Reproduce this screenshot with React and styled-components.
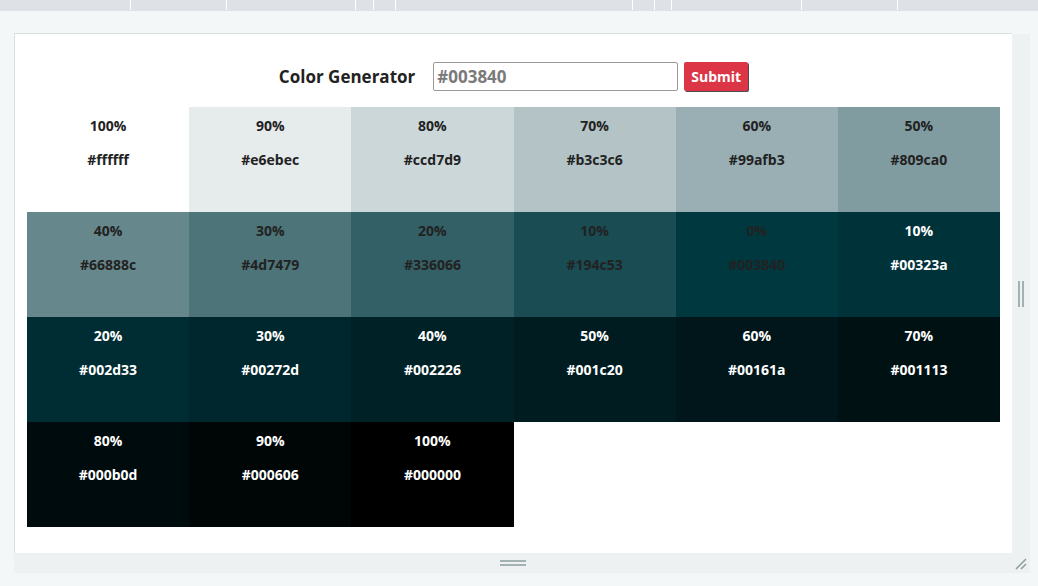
import styled, { createGlobalStyle } from "styled-components"

const GlobalStyle = createGlobalStyle`
  body {
    margin: 0;
    background: #f4f7f7;
    font-family: "Open Sans", "Noto Sans", sans-serif;
  }
`

const TopBar = styled.div`
  height: 11px;
  background: #dee1e6;
  display: flex;
`

const Tab = styled.div`
  width: ${props => props.$w}px;
  height: 10px;
  border-right: 1px solid #ffffff;
  flex-shrink: 0;
`

const Stage = styled.div`
  padding: 22px 0 0 14px;
`

const Frame = styled.div`
  display: grid;
  grid-template-columns: 998px 18px;
  grid-template-rows: 520px 20px;
`

const Card = styled.div`
  box-sizing: border-box;
  background: #ffffff;
  border-top: 1px solid #dcdfdf;
  border-left: 1px solid #dcdfdf;
  padding: 28px 12px 26px 12px;
`

const SideGrip = styled.div`
  margin-top: 1px;
  background: #eef1f2;
  display: flex;
  align-items: center;
  justify-content: center;
  gap: 2px;

  span {
    width: 2px;
    height: 26px;
    background: #a3b1b2;
  }
`

const BottomGrip = styled.div`
  background: #eef1f2;
  display: flex;
  flex-direction: column;
  align-items: center;
  justify-content: center;
  gap: 2px;

  span {
    width: 26px;
    height: 2px;
    background: #a3b1b2;
  }
`

const Corner = styled.div`
  background: #eef1f2;
  display: flex;
  align-items: flex-end;
  justify-content: flex-start;
  padding: 0 0 3px 3px;
`

const Header = styled.form`
  display: flex;
  align-items: center;
  justify-content: center;
  height: 29px;
  margin-bottom: 16px;
`

const Title = styled.h3`
  margin: 0 18px 0 0;
  font-size: 17px;
  font-weight: 700;
  color: #222222;
`

const Input = styled.input`
  box-sizing: border-box;
  width: 245px;
  height: 29px;
  border: 1px solid #9b9b95;
  border-radius: 2px;
  padding: 0 3px;
  font-family: inherit;
  font-size: 17px;
  font-weight: 700;
  color: #7a7a7a;
  outline: none;
`

const Button = styled.button`
  box-sizing: border-box;
  margin-left: 6px;
  height: 29px;
  padding: 0 7px;
  background: #dc3545;
  color: #ffffff;
  border: none;
  border-radius: 2px;
  box-shadow: 1px 1px 0 rgba(0, 0, 0, 0.7);
  font-family: inherit;
  font-size: 14px;
  font-weight: 700;
  cursor: pointer;
`

const Palette = styled.section`
  display: grid;
  grid-template-columns: repeat(6, 1fr);
  grid-auto-rows: 105px;
`

const Swatch = styled.article`
  background: ${props => props.$bg};
  color: ${props => props.$light ? "#ffffff" : "#222222"};
  display: flex;
  flex-direction: column;
  align-items: center;
  padding-top: 9px;
  gap: 14px;
  font-size: 14px;
  font-weight: 700;
  line-height: 20px;
  cursor: pointer;

  p {
    margin: 0;
  }
`

const tabs = [130, 95, 128, 17, 21, 236, 21, 16, 129, 95]

// tints from 100% down to 10%, the base colour, then shades 10% to 100%
const colors = [
  ["100", "#ffffff"], ["90", "#e6ebec"], ["80", "#ccd7d9"], ["70", "#b3c3c6"],
  ["60", "#99afb3"], ["50", "#809ca0"], ["40", "#66888c"], ["30", "#4d7479"],
  ["20", "#336066"], ["10", "#194c53"], ["0", "#003840"],
  ["10", "#00323a"], ["20", "#002d33"], ["30", "#00272d"], ["40", "#002226"],
  ["50", "#001c20"], ["60", "#00161a"], ["70", "#001113"], ["80", "#000b0d"],
  ["90", "#000606"], ["100", "#000000"],
]

const App = () => {
  return (
    <>
      <GlobalStyle />
      <TopBar>
        {tabs.map((w, i) => <Tab key={i} $w={w} />)}
      </TopBar>

      <Stage>
        <Frame>
          <Card>
            <Header onSubmit={e => e.preventDefault()}>
              <Title>Color Generator</Title>
              <Input type="text" defaultValue="#003840" />
              <Button type="submit">Submit</Button>
            </Header>

            <Palette>
              {colors.map(([weight, hex], index) => (
                <Swatch key={index} $bg={hex} $light={index > 10}>
                  <p>{weight}%</p>
                  <p>{hex}</p>
                </Swatch>
              ))}
            </Palette>
          </Card>

          <SideGrip>
            <span />
            <span />
          </SideGrip>

          <BottomGrip>
            <span />
            <span />
          </BottomGrip>

          <Corner>
            <svg width="12" height="12" viewBox="0 0 12 12">
              <path d="M1 11 L11 1 M6 11 L11 6" stroke="#8e9c9d" strokeWidth="1.5" />
            </svg>
          </Corner>
        </Frame>
      </Stage>
    </>
  )
}

export default App
